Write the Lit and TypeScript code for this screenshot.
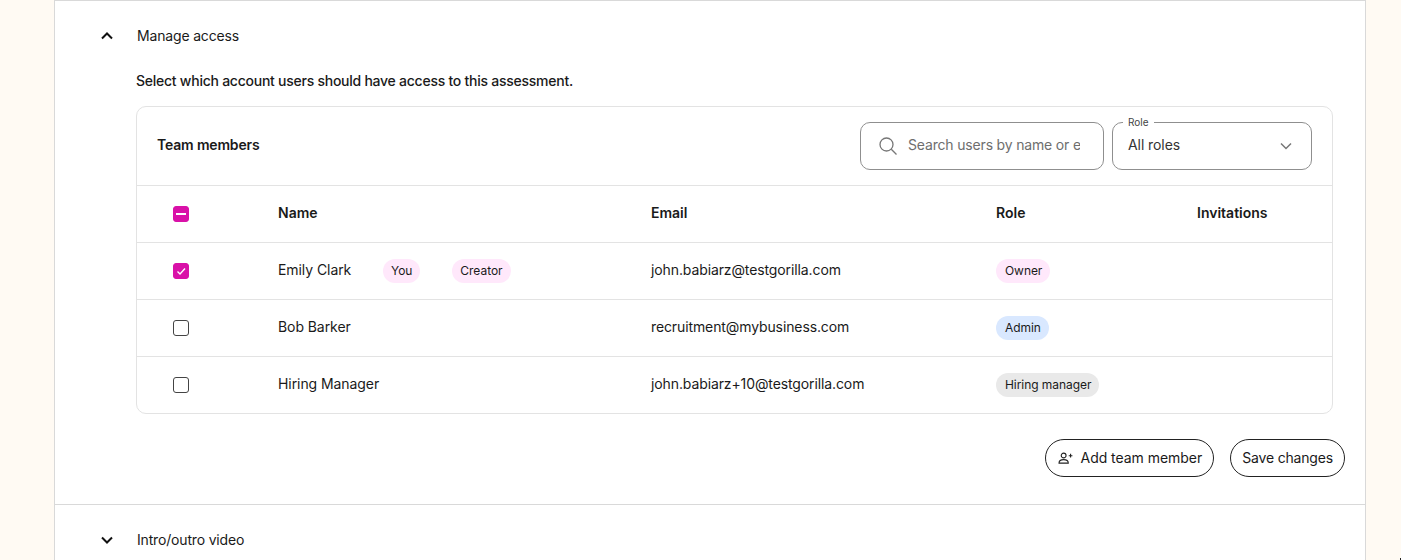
import { LitElement, html, css } from "lit";
import { customElement } from "lit/decorators.js";

const chevron = (up: boolean) => html`<svg class="chev" width="14" height="10" viewBox="0 0 14 10" fill="none">
  <path d=${up ? "M2 7.5 L7 2.5 L12 7.5" : "M2 2.5 L7 7.5 L12 2.5"} stroke="#111" stroke-width="2"/></svg>`;

type Row = { name: string; tags: string[]; email: string; role: string; cls: string; state: string };
const rows: Row[] = [
  { name: "Emily Clark", tags: ["You", "Creator"], email: "john.babiarz@testgorilla.com", role: "Owner", cls: "pink", state: "checked" },
  { name: "Bob Barker", tags: [], email: "recruitment@mybusiness.com", role: "Admin", cls: "blue", state: "" },
  { name: "Hiring Manager", tags: [], email: "john.babiarz+10@testgorilla.com", role: "Hiring manager", cls: "grey", state: "" },
];

@customElement("app-root")
export class AppRoot extends LitElement {
  static styles = css`
    :host { display: block; position: relative; height: 560px; overflow: hidden; background: #fffaf3; font-family: Inter, "Liberation Sans", sans-serif; color: #1a1a1a; font-size: 14px; letter-spacing: -0.17px; }
    .panel { margin: 0 35px 0 54px; height: 560px; box-sizing: border-box; background: #fff; border: 1px solid #d9d9d9; border-bottom: 0; }
    .section { height: 504px; box-sizing: border-box; border-bottom: 1px solid #d9d9d9; padding: 0 20px 0 81px; display: flex; flex-direction: column; }
    .head { display: flex; align-items: flex-start; flex: none; margin-left: -36px; padding-top: 25px; box-sizing: border-box; height: 70px; }
    .chev { width: 14px; height: 10px; margin-right: 23px; margin-top: 5px; flex: none; }
    .title { line-height: 20px; }
    .desc { line-height: 20px; height: 20px; margin-bottom: 15px; font-weight: 450; letter-spacing: -0.25px; }
    .card { width: 1197px; height: 308px; box-sizing: border-box; border: 1px solid #e3e3e3; border-radius: 10px; flex: none; }
    .toolbar { height: 79px; box-sizing: border-box; display: flex; align-items: center; padding: 0 20px; gap: 8px; border-bottom: 1px solid #e3e3e3; }
    .toolbar h3 { margin: -3px auto 0 0; font-size: 14px; font-weight: 600; }
    .field { height: 48px; box-sizing: border-box; border: 1px solid #8f8f8f; border-radius: 10px; display: flex; align-items: center; position: relative; }
    .search { width: 244px; padding: 0 0 0 18px; gap: 10px; overflow: hidden; }
    .search svg { flex: none; margin-left: -1px; }
    .search input { width: 172px; padding: 0; border: 0; outline: 0; background: none; font: inherit; letter-spacing: inherit; color: #1a1a1a; margin-top: -4px; }
    .search input::placeholder { color: #6e6e6e; opacity: 1; }
    .select { width: 200px; padding: 0 18px 0 15px; justify-content: space-between; color: #333; }
    .select > span:nth-child(2) { margin-top: -4px; letter-spacing: -0.08px; }
    .legend { position: absolute; top: -7px; left: 10px; background: #fff; padding: 0 5px; font-size: 10px; line-height: 12px; color: #444; letter-spacing: 0; }
    .row { display: grid; grid-template-columns: 141px 373px 345px 201px 1fr; height: 57px; align-items: center; box-sizing: border-box; border-bottom: 1px solid #e3e3e3; }
    .row:last-child { border-bottom: 0; height: 56px; }
    .th { font-weight: 600; padding-bottom: 3px; letter-spacing: 0; }
    .cbx { margin-left: 36px; width: 16px; height: 16px; box-sizing: border-box; border-radius: 3px; border: 1.5px solid #444; display: flex; align-items: center; justify-content: center; }
    .cbx.on { background: #d911a8; border-color: #d911a8; }
    .name { display: flex; align-items: center; }
    .name .n { width: 105px; padding-bottom: 3px; letter-spacing: -0.07px; }
    .mail { padding-bottom: 3px; letter-spacing: -0.11px; }
    .tag { display: inline-flex; align-items: center; height: 24px; box-sizing: border-box; padding: 0 8px 2px 9px; border-radius: 12px; font-size: 12px; letter-spacing: -0.06px; justify-self: start; }
    .name .tag:first-of-type { letter-spacing: -0.6px; }
    .name .tag { padding: 0 8px 2px; }
    .name .tag + .tag { margin-left: 32px; letter-spacing: -0.03px; }
    .pink { background: #ffe8fb; }
    .blue { background: #d9e8ff; }
    .grey { background: #e9e9e9; }
    .actions { display: flex; justify-content: flex-end; gap: 16px; margin-top: 25px; }
    .btn { height: 38px; box-sizing: border-box; border: 1px solid #222; border-radius: 19px; background: #fff; display: flex; align-items: center; padding: 0 11px; font: inherit; letter-spacing: inherit; color: #1a1a1a; }
    .btn span { margin-top: -2px; }
    .btn svg { margin-right: 8px; margin-left: 1px; }
    .btn.add span { letter-spacing: -0.04px; }
    .next { height: 55px; display: flex; align-items: flex-start; padding: 25px 0 0 45px; box-sizing: border-box; }
    .speck { position: absolute; right: 0; bottom: 0; width: 1px; height: 2px; background: #222; }
  `;

  box(state: string) {
    if (state === "checked") return html`<div class="cbx on"><svg width="12" height="12" viewBox="0 0 12 12" fill="none"><path d="M2.5 6.5 L5 9 L10 3.5" stroke="#fff" stroke-width="1.4"/></svg></div>`;
    if (state === "mixed") return html`<div class="cbx on"><svg width="12" height="12" viewBox="0 0 12 12" fill="none"><path d="M1 6 H11" stroke="#fff" stroke-width="2"/></svg></div>`;
    return html`<div class="cbx"></div>`;
  }

  render() {
    return html`<div class="panel">
      <div class="section">
        <div class="head">${chevron(true)}<span class="title">Manage access</span></div>
        <div class="desc">Select which account users should have access to this assessment.</div>
        <div class="card">
          <div class="toolbar">
            <h3>Team members</h3>
            <div class="field search">
              <svg width="20" height="20" viewBox="0 0 20 20" fill="none" stroke="#777" stroke-width="1.3"><circle cx="8.5" cy="8.5" r="6.5"/><path d="M13.3 13.3 L18.5 18.5"/></svg>
              <input placeholder="Search users by name or email" />
            </div>
            <div class="field select">
              <span class="legend">Role</span>
              <span>All roles</span>
              <svg width="14" height="10" viewBox="0 0 14 10" fill="none"><path d="M2 2.5 L7 7.5 L12 2.5" stroke="#777" stroke-width="1.5"/></svg>
            </div>
          </div>
          <div class="row">
            ${this.box("mixed")}
            <div class="th">Name</div><div class="th">Email</div><div class="th">Role</div><div class="th">Invitations</div>
          </div>
          ${rows.map((r) => html`<div class="row">
            ${this.box(r.state)}
            <div class="name"><span class="n">${r.name}</span>${r.tags.map((t) => html`<span class="tag pink">${t}</span>`)}</div>
            <div class="mail">${r.email}</div>
            <span class="tag ${r.cls}">${r.role}</span>
            <div></div>
          </div>`)}
        </div>
        <div class="actions">
          <button class="btn add"><svg width="15" height="12" viewBox="0 0 16 13" fill="none" stroke="#222" stroke-width="1.2"><circle cx="6" cy="3.8" r="2.6"/><path d="M1 12 C1 9 3.5 8.3 6 8.3 C8.5 8.3 11 9 11 12 Z"/><path d="M11.5 4 H15.5 M13.5 2 V6"/></svg><span>Add team member</span></button>
          <button class="btn"><span>Save changes</span></button>
        </div>
      </div>
      <div class="next">${chevron(false)}<span class="title">Intro/outro video</span></div>
    </div>
    <div class="speck"></div>`;
  }
}
